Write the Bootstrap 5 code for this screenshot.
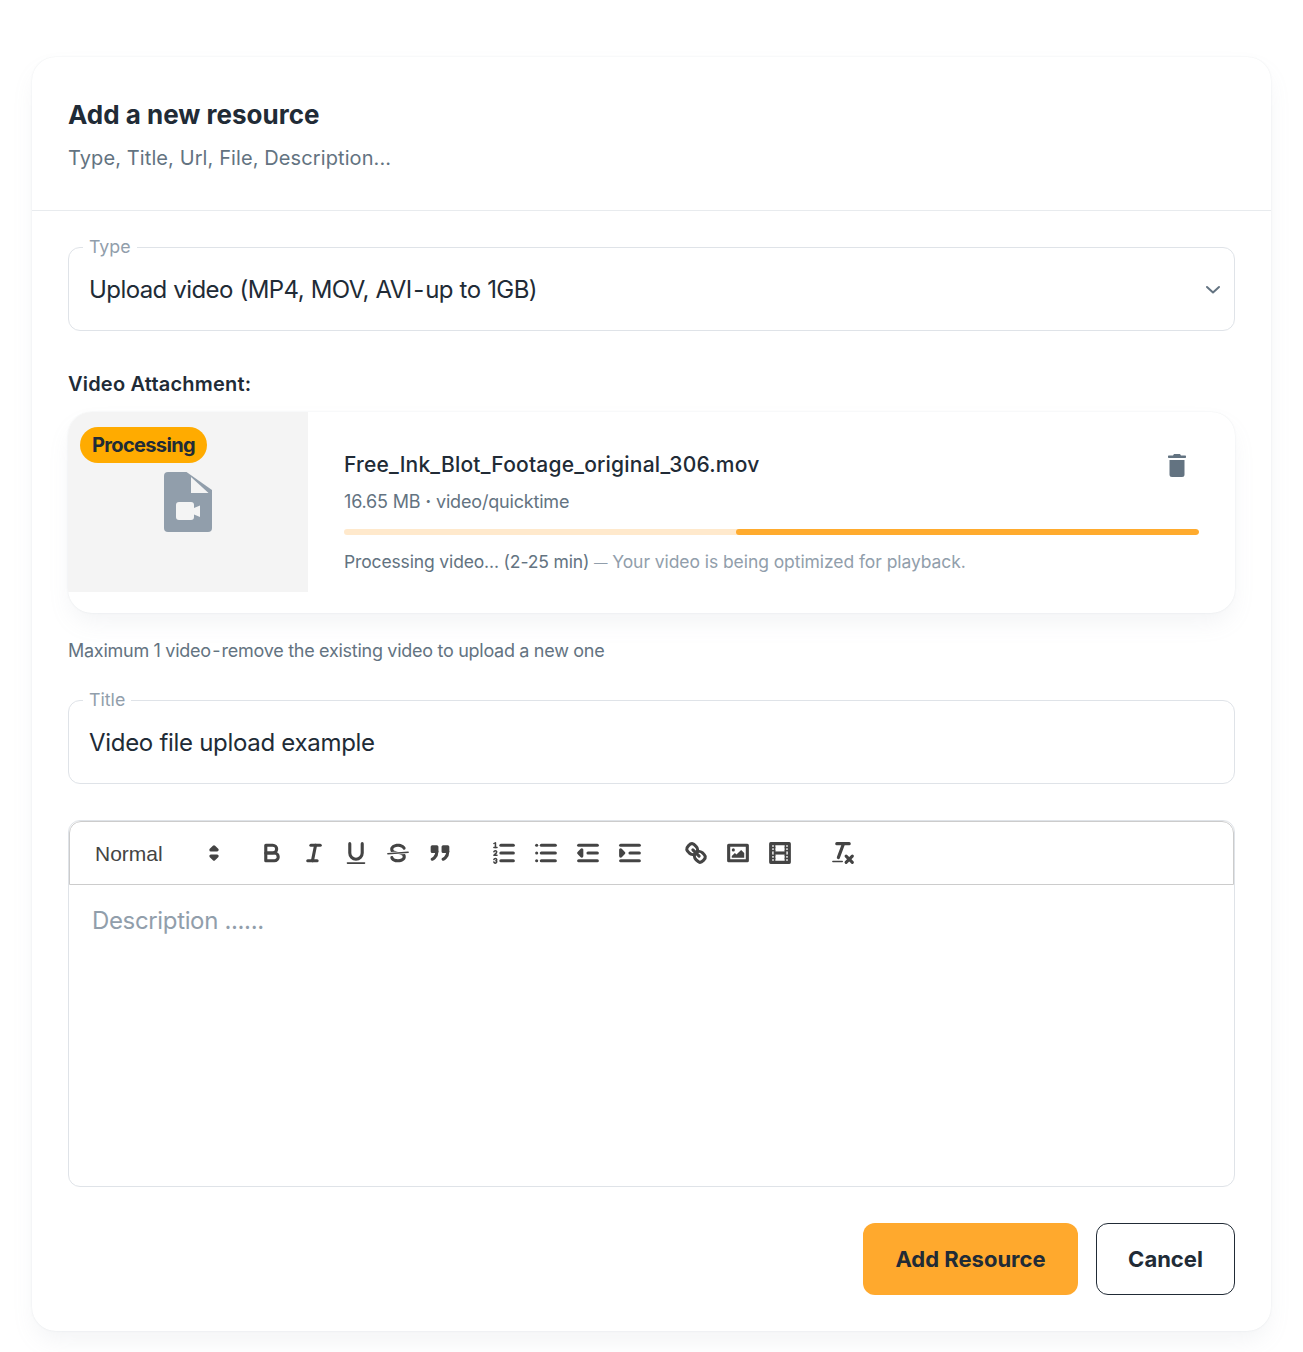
<!DOCTYPE html>
<html lang="en">
<head>
<meta charset="utf-8">
<title>Add a new resource</title>
<link href="https://cdn.jsdelivr.net/npm/bootstrap@5.3.0/dist/css/bootstrap.min.css" rel="stylesheet">
<style>
body{background:#fff;font-family:Inter,"Liberation Sans",sans-serif;color:#212b36;padding:57px 32px 21px}
.res-card{border:0;border-radius:24px;box-shadow:0 0 2px rgba(145,158,171,.2),0 12px 24px -4px rgba(145,158,171,.12);height:1274px}
.res-head{padding:36px 36px 0;height:154px;border-bottom:1px solid #e8ebee}
.res-title{font-size:26px;font-weight:700;line-height:44px;margin:0}
.res-sub{font-size:20px;line-height:30px;color:#637381;margin:6px 0 0;letter-spacing:.1px}
.res-body{padding:36px}
.float-field{position:relative;margin-bottom:37px}
.float-label{position:absolute;left:15px;top:-12px;background:#fff;padding:0 6px;font-size:17.800px;line-height:24px;color:#919eab}
.res-select,.res-input{height:84px;border:1px solid #dfe3e8;border-radius:12px;padding:1px 20px 0;font-size:24px;color:#212b36;box-shadow:none;letter-spacing:-.3px}
.res-select{background-image:none;appearance:none;padding-top:2px;letter-spacing:-.58px;word-spacing:.5px}
.sel-chev{position:absolute;right:14px;top:38px;width:16px;height:10px}
.att-label{font-size:20px;font-weight:600;line-height:32px;margin-bottom:12px;letter-spacing:.2px}
.att-card{border-radius:24px;overflow:hidden;height:201px;box-shadow:0 0 2px rgba(145,158,171,.2),0 12px 24px -4px rgba(145,158,171,.12);background:#fff}
.att-thumb{position:relative;width:240px;height:180px;background:#f4f4f4;flex:none}
.att-badge{position:absolute;left:12px;top:15px;background:#ffab00;color:#212b36;font-size:20px;font-weight:700;line-height:36px;height:36px;padding:0 12px;border-radius:18px;letter-spacing:-.65px}
.att-file{position:absolute;left:96px;top:60px;width:48px;height:60px}
.att-main{padding:37px 36px 0;flex:1;min-width:0}
.att-name{font-size:21px;font-weight:500;line-height:32px;letter-spacing:.2px}
.att-meta{font-size:18px;line-height:28px;color:#637381;margin-top:7px;letter-spacing:-.18px}
.att-bar{height:6px;border-radius:3px;background:#ffe9cc;margin-top:13px}
.att-bar .progress-bar{margin-left:auto;background:#ffab2e;border-radius:3px}
.att-note{font-size:17.500px;line-height:28px;color:#919eab;margin-top:13px;letter-spacing:-.14px}
.note-lead{font-weight:400;color:#637381}
.note-dash{font-size:13.500px}
.note-rest{letter-spacing:-.07px}
.att-trash{width:18px;height:23px;color:#637381;margin-right:13px}
.att-help{font-size:18px;line-height:28px;color:#637381;margin:24px 0 35px;letter-spacing:-.25px;word-spacing:-.2px}
.ed-box{height:367px;border:1px solid #dfe3e8;border-radius:12px;overflow:hidden;margin-top:-1px}
.ed-bar{height:64px;border:1px solid #ccc;border-radius:12px 12px 0 0;padding:0 0 0 25px}
.ed-pick{width:135px;margin-right:21px;font-family:"Liberation Sans",sans-serif;font-size:21px;color:#444;position:relative}
.ed-pick svg{position:absolute;right:2px;top:-1px;width:28px;height:28px}
.ed-pick span{line-height:24px;padding-top:2px}
.ed-gap-a{margin-right:22px}
.ed-gap-b{margin-right:23.500px}
.ed-gap-c{margin-right:21px}
.ed-btn{width:42px;height:38px;padding:5px 7px;border:0;background:none;display:block}
.ed-btn svg{width:28px;height:28px;display:block}
.ed-s{fill:none;stroke:#444;stroke-width:2;stroke-linecap:round;stroke-linejoin:round}
.ed-t{fill:none;stroke:#444;stroke-width:1;stroke-linecap:round;stroke-linejoin:round}
.ed-f{fill:#444}
.ed-area{padding:18px 23px;font-size:24px;line-height:36px;color:#919eab;letter-spacing:-.35px}
.res-actions{margin-top:36px}
.act-main,.act-cancel{height:72px;border-radius:12px;font-size:22px;font-weight:700;line-height:1;color:#212b36}
.act-main{width:215px;background:#ffa92d;border:0}
.act-cancel{width:139px;background:#fff;border:1px solid #212b36;margin-left:18px}
</style>
</head>
<body>
<div class="card res-card">
  <div class="res-head">
    <h1 class="res-title">Add a new resource</h1>
    <p class="res-sub">Type, Title, Url, File, Description...</p>
  </div>
  <div class="res-body">
    <div class="float-field">
      <label class="float-label" for="typeSel">Type</label>
      <select id="typeSel" class="form-select res-select"><option>Upload video (MP4, MOV, AVI&#8202;-&#8202;up to 1GB)</option></select>
      <svg class="sel-chev" viewBox="0 0 16 10"><path d="M2 2l6 5.500L14 2" fill="none" stroke="#637381" stroke-width="2" stroke-linecap="round" stroke-linejoin="round"/></svg>
    </div>
    <div class="att-label">Video Attachment:</div>
    <div class="att-card d-flex align-items-start">
      <div class="att-thumb">
        <span class="att-badge">Processing</span>
        <svg class="att-file" viewBox="0 0 48 60"><path fill="#919eab" d="M4 0H22.500L48 18V56a4 4 0 0 1-4 4H4a4 4 0 0 1-4-4V4a4 4 0 0 1 4-4Z"/><path fill="#f4f4f4" d="M27 5V21H44.500Z"/><rect x="12" y="30" width="18" height="18" rx="3" fill="#f4f4f4"/><path fill="#f4f4f4" d="M30 36l6-2.500V45l-6-2.500Z"/></svg>
      </div>
      <div class="att-main">
        <div class="d-flex justify-content-between align-items-center">
          <div class="att-name">Free_Ink_Blot_Footage_original_306.mov</div>
          <svg class="att-trash" viewBox="0 0 18 23"><path fill="currentColor" d="M6 0h6l1 1.500h4.300a.7.7 0 0 1 .7.700v1a.7.7 0 0 1-.7.7H.7a.7.7 0 0 1-.7-.7v-1a.7.7 0 0 1 .7-.7H5ZM1.500 6h15v14.500a2.500 2.500 0 0 1-2.500 2.500H4a2.500 2.500 0 0 1-2.500-2.500Z"/></svg>
        </div>
        <div class="att-meta">16.65 MB <strong>&middot;</strong> video/quicktime</div>
        <div class="progress att-bar"><div class="progress-bar" style="width:54.2%"></div></div>
        <div class="att-note"><span class="note-lead">Processing video... (2-25 min)</span> <span class="note-dash">—</span> <span class="note-rest">Your video is being optimized for playback.</span></div>
      </div>
    </div>
    <div class="att-help">Maximum 1 video&#8202;-&#8202;remove the existing video to upload a new one</div>
    <div class="float-field">
      <label class="float-label" for="titleIn">Title</label>
      <input id="titleIn" class="form-control res-input" value="Video file upload example">
    </div>
    <div class="ed-box">
      <div class="ed-bar d-flex align-items-center">
        <div class="ed-pick d-flex align-items-center"><span>Normal</span>
          <svg viewBox="0 0 18 18"><polygon class="ed-s ed-f" points="7 11 9 13 11 11 7 11"/><polygon class="ed-s ed-f" points="7 7 9 5 11 7 7 7"/></svg>
        </div>
        <div class="d-flex ed-gap-a">
          <button class="ed-btn" type="button"><svg viewBox="0 0 18 18"><path class="ed-s" d="M5,4H9.500A2.500,2.500,0,0,1,12,6.500v0A2.500,2.500,0,0,1,9.500,9H5A0,0,0,0,1,5,9V4A0,0,0,0,1,5,4Z"/><path class="ed-s" d="M5,9h5.500A2.500,2.500,0,0,1,13,11.500v0A2.500,2.500,0,0,1,10.500,14H5a0,0,0,0,1,0,0V9A0,0,0,0,1,5,9Z"/></svg></button>
          <button class="ed-btn" type="button"><svg viewBox="0 0 18 18"><line class="ed-s" x1="7" x2="13" y1="4" y2="4"/><line class="ed-s" x1="5" x2="11" y1="14" y2="14"/><line class="ed-s" x1="8" x2="10" y1="14" y2="4"/></svg></button>
          <button class="ed-btn" type="button"><svg viewBox="0 0 18 18"><path class="ed-s" d="M5,3V9a4.012,4.012,0,0,0,4,4H9a4.012,4.012,0,0,0,4-4V3"/><rect class="ed-f" height="1" rx=".5" ry=".5" width="12" x="3" y="15"/></svg></button>
          <button class="ed-btn" type="button"><svg viewBox="0 0 18 18"><line class="ed-t" x1="15.500" x2="2.500" y1="8.500" y2="9.500"/><path class="ed-f" d="M9.007,8C6.542,7.791,6,7.519,6,6.500,6,5.792,7.283,5,9,5c1.571,0,2.765.679,2.969,1.309a1,1,0,0,0,1.900-.617C13.356,4.106,11.354,3,9,3,6.200,3,4,4.538,4,6.500a3.200,3.200,0,0,0,.5,1.843Z"/><path class="ed-f" d="M8.984,10C11.457,10.208,12,10.479,12,11.500c0,.708-1.283,1.500-3,1.500-1.571,0-2.765-.679-2.969-1.309a1,1,0,1,0-1.900.617C4.644,13.894,6.646,15,9,15c2.800,0,5-1.538,5-3.500a3.200,3.200,0,0,0-.5-1.843Z"/></svg></button>
          <button class="ed-btn" type="button"><svg viewBox="0 0 18 18"><rect class="ed-s ed-f" height="3" width="3" x="4" y="5"/><rect class="ed-s ed-f" height="3" width="3" x="11" y="5"/><path class="ed-s" d="M7,8c0,4.031-3,5-3,5"/><path class="ed-s" d="M14,8c0,4.031-3,5-3,5"/></svg></button>
        </div>
        <div class="d-flex ed-gap-b">
          <button class="ed-btn" type="button"><svg viewBox="0 0 18 18"><line class="ed-s" x1="7" x2="15" y1="4" y2="4"/><line class="ed-s" x1="7" x2="15" y1="9" y2="9"/><line class="ed-s" x1="7" x2="15" y1="14" y2="14"/><line class="ed-t" x1="2.500" x2="4.500" y1="5.500" y2="5.500"/><path class="ed-f" d="M3.500,6A0.500,0.500,0,0,1,3,5.500V3.085l-0.276.138A0.500,0.500,0,0,1,2.053,3c-0.124-.247-0.023-0.324.224-0.447l1-.5A0.500,0.500,0,0,1,4,2.500v3A0.500,0.500,0,0,1,3.500,6Z"/><path class="ed-t" d="M4.500,10.500h-2c0-.234,1.850-1.076,1.850-2.234A0.959,0.959,0,0,0,2.500,8.156"/><path class="ed-t" d="M2.500,14.846a0.959,0.959,0,0,0,1.850-.109A0.700,0.700,0,0,0,3.750,14a0.688,0.688,0,0,0,.6-0.736,0.959,0.959,0,0,0-1.850-.109"/></svg></button>
          <button class="ed-btn" type="button"><svg viewBox="0 0 18 18"><line class="ed-s" x1="6" x2="15" y1="4" y2="4"/><line class="ed-s" x1="6" x2="15" y1="9" y2="9"/><line class="ed-s" x1="6" x2="15" y1="14" y2="14"/><line class="ed-s" x1="3" x2="3" y1="4" y2="4"/><line class="ed-s" x1="3" x2="3" y1="9" y2="9"/><line class="ed-s" x1="3" x2="3" y1="14" y2="14"/></svg></button>
          <button class="ed-btn" type="button"><svg viewBox="0 0 18 18"><line class="ed-s" x1="3" x2="15" y1="14" y2="14"/><line class="ed-s" x1="3" x2="15" y1="4" y2="4"/><line class="ed-s" x1="9" x2="15" y1="9" y2="9"/><polyline class="ed-s" points="5 7 5 11 3 9 5 7"/></svg></button>
          <button class="ed-btn" type="button"><svg viewBox="0 0 18 18"><line class="ed-s" x1="3" x2="15" y1="14" y2="14"/><line class="ed-s" x1="3" x2="15" y1="4" y2="4"/><line class="ed-s" x1="9" x2="15" y1="9" y2="9"/><polyline class="ed-s ed-f" points="3 7 3 11 5 9 3 7"/></svg></button>
        </div>
        <div class="d-flex ed-gap-c">
          <button class="ed-btn" type="button"><svg viewBox="0 0 18 18"><line class="ed-s" x1="7" x2="11" y1="7" y2="11"/><path class="ed-s" d="M8.900,4.577a3.476,3.476,0,0,1,.36,4.679A3.476,3.476,0,0,1,4.577,8.900C3.185,7.500,2.035,6.400,4.217,4.217S7.500,3.185,8.900,4.577Z"/><path class="ed-s" d="M13.423,9.100a3.476,3.476,0,0,0-4.679-.36,3.476,3.476,0,0,0,.36,4.679c1.392,1.392,2.500,2.542,4.679.36S14.815,10.500,13.423,9.100Z"/></svg></button>
          <button class="ed-btn" type="button"><svg viewBox="0 0 18 18"><rect class="ed-s" height="10" width="12" x="3" y="4"/><circle class="ed-f" cx="6" cy="7" r="1"/><polyline class="ed-f" points="5 12 5 11 7 9 8 10 11 7 13 9 13 12 5 12"/></svg></button>
          <button class="ed-btn" type="button"><svg viewBox="0 0 18 18"><rect class="ed-s" height="12" width="12" x="3" y="3"/><rect class="ed-f" height="12" width="1" x="5" y="3"/><rect class="ed-f" height="12" width="1" x="12" y="3"/><rect class="ed-f" height="2" width="8" x="5" y="8"/><rect class="ed-f" height="1" width="3" x="3" y="5"/><rect class="ed-f" height="1" width="3" x="3" y="7"/><rect class="ed-f" height="1" width="3" x="3" y="10"/><rect class="ed-f" height="1" width="3" x="3" y="12"/><rect class="ed-f" height="1" width="3" x="12" y="5"/><rect class="ed-f" height="1" width="3" x="12" y="7"/><rect class="ed-f" height="1" width="3" x="12" y="10"/><rect class="ed-f" height="1" width="3" x="12" y="12"/></svg></button>
        </div>
        <div class="d-flex">
          <button class="ed-btn" type="button"><svg viewBox="0 0 18 18"><line class="ed-s" x1="5" x2="13" y1="3" y2="3"/><line class="ed-s" x1="6" x2="9.350" y1="12" y2="3"/><line class="ed-s" x1="11" x2="15" y1="11" y2="15"/><line class="ed-s" x1="15" x2="11" y1="11" y2="15"/><rect class="ed-f" height="1" rx=".5" ry=".5" width="7" x="2" y="14"/></svg></button>
        </div>
      </div>
      <div class="ed-area">Description ......</div>
    </div>
    <div class="d-flex justify-content-end res-actions">
      <button class="btn act-main" type="button">Add Resource</button>
      <button class="btn act-cancel" type="button">Cancel</button>
    </div>
  </div>
</div>
<script src="https://cdn.jsdelivr.net/npm/bootstrap@5.3.0/dist/js/bootstrap.bundle.min.js"></script>
</body>
</html>
